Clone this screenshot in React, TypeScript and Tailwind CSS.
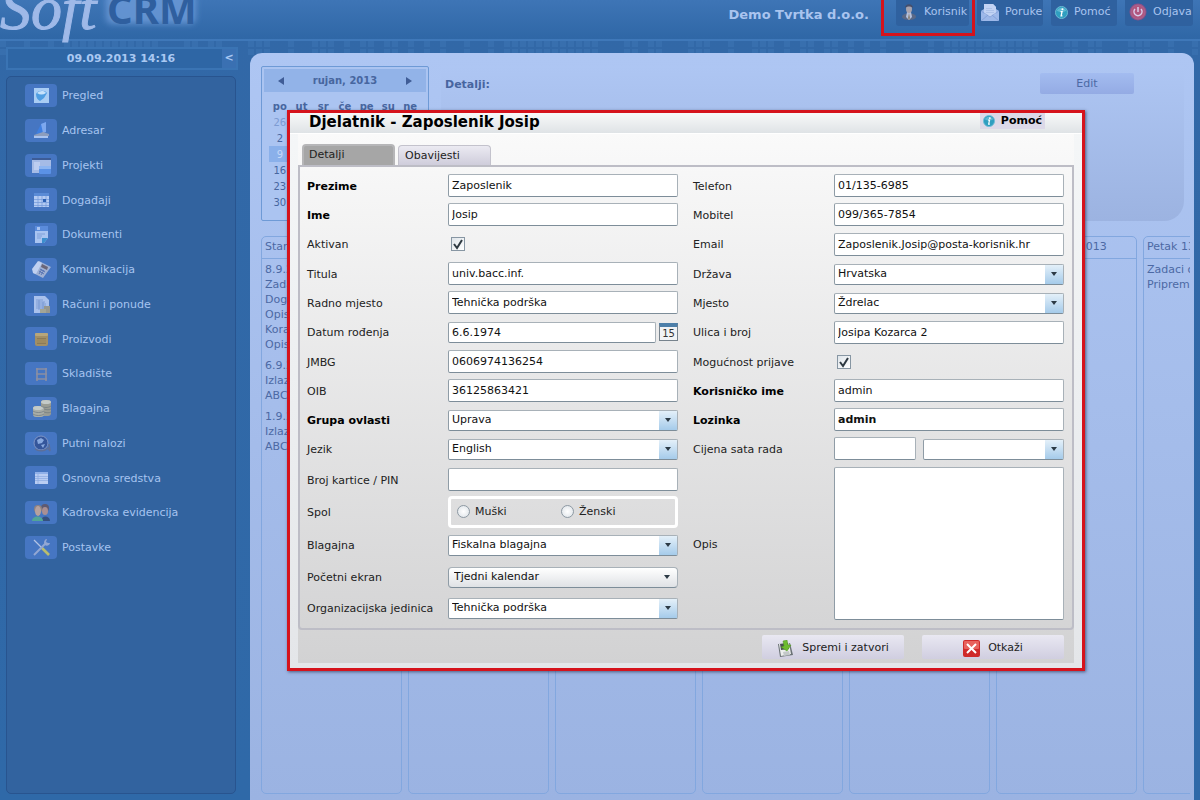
import type { ReactNode } from 'react'

interface IconProps {
  className?: string
}

interface FieldProps {
  id: string
  label: string
  bold?: boolean
  children: ReactNode
}

const MENU: { label: string; icon: ReactNode }[] = [
  {
    label: 'Pregled',
    icon: (
      <>
        <rect x="2" y="2" width="15" height="15" fill="#a9cdf4" />
        <path d="M4 8c2-4 9-4 11-1-1 2-2 3-3 5l-4 3c-2-1-4-3-4-7z" fill="#4f9ee2" />
        <path d="M5 7c2-2 7-3 9 0-3 2-6 2-9 0z" fill="#c6e2fb" />
      </>
    ),
  },
  {
    label: 'Adresar',
    icon: (
      <>
        <path d="M4 13L9 3l5-2v10z" fill="#3f7fe0" />
        <path d="M9 3l5-2v10l-3 1z" fill="#7da8ee" />
        <path d="M2 14l9-3 6 2v2H2z" fill="#8c9dbd" />
        <rect x="2" y="15" width="14" height="2" fill="#a9c3ef" />
      </>
    ),
  },
  {
    label: 'Projekti',
    icon: (
      <>
        <rect x="0" y="2" width="19" height="15" fill="#a5bbe6" />
        <rect x="0" y="2" width="19" height="2" fill="#3d5c96" />
        <rect x="2" y="6" width="6" height="8" fill="#bccdf0" />
        <rect x="7" y="10" width="12" height="8" rx="1" fill="#5b92e6" />
        <rect x="7" y="10" width="12" height="3" fill="#8db5f1" />
      </>
    ),
  },
  {
    label: 'Događaji',
    icon: (
      <>
        <rect x="2" y="3" width="15" height="14" fill="#b4cbf3" />
        <rect x="2" y="3" width="15" height="3" fill="#5a8bd6" />
        <path d="M2 9.5h15M2 12.5h15M2 15.5h15M6 6v11M10 6v11M14 6v11" stroke="#7299d8" strokeWidth=".7" />
        <rect x="11" y="9" width="3" height="3" fill="#2d62b4" />
      </>
    ),
  },
  {
    label: 'Dokumenti',
    icon: (
      <>
        <path d="M3 1h13v12l-4 5H3z" fill="#a9c4f1" />
        <rect x="3" y="1" width="13" height="5" fill="#5b8cdb" />
        <rect x="5" y="2" width="3" height="3" fill="#a9c4f1" />
        <path d="M5 9h8M5 11h5M5 13h4" stroke="#7f9fd8" strokeWidth="1" />
        <path d="M10 13h6l-4 5h-2z" fill="#3d8fce" />
      </>
    ),
  },
  {
    label: 'Komunikacija',
    icon: (
      <>
        <path d="M7 1l12 6-8 11L1 13z" fill="#9fb0d3" />
        <path d="M6 1L0 9l1 4 3 1 6-11z" fill="#c0d0f0" />
        <path d="M10 4l6 3-1 3-6-3z" fill="#6b6678" />
        <path d="M8 9l5 3M7 11l5 3M10 9l-3 5M12 10l-3 5" stroke="#5a76b4" strokeWidth="1" />
      </>
    ),
  },
  {
    label: 'Računi i ponude',
    icon: (
      <>
        <path d="M2 1h11l4 4v13H2z" fill="#a9c1ec" />
        <path d="M4 5h7M4 7h9M4 9h10M4 11h10M4 13h8M7 5v10M11 7v8" stroke="#6f8fcb" strokeWidth=".7" />
        <rect x="12" y="11" width="6" height="7" fill="#96978f" />
        <rect x="8" y="14" width="6" height="4" fill="#a3a596" />
      </>
    ),
  },
  {
    label: 'Proizvodi',
    icon: (
      <>
        <rect x="3" y="4" width="13" height="13" rx="2" fill="#a28f66" />
        <rect x="3" y="4" width="13" height="3" rx="1" fill="#b7a67b" />
        <rect x="5" y="9" width="9" height="6" fill="#8b7a57" />
        <path d="M5 11h9M5 13h9" stroke="#b09a69" strokeWidth="1" />
      </>
    ),
  },
  {
    label: 'Skladište',
    icon: (
      <path d="M5 4v13M14 4v13M4 5h11M4 10h11M4 15h11" stroke="#8b8fa3" strokeWidth="1.6" fill="none" />
    ),
  },
  {
    label: 'Blagajna',
    icon: (
      <>
        <rect x="9" y="1" width="10" height="16" rx="3" fill="#9a9d95" />
        <rect x="1" y="7" width="11" height="11" rx="3" fill="#a9ada7" />
        <ellipse cx="14" cy="3" rx="5" ry="2" fill="#c4cac8" />
        <ellipse cx="6" cy="9" rx="5" ry="2" fill="#c4cac8" />
        <path d="M9 7c3 2 7 2 10 0M12 10c3 1 5 1 7 0M12 13c3 1 5 1 7 0M1 12c3 2 8 2 11 0M1 15c3 2 8 2 11 0" stroke="#6f7880" strokeWidth=".7" fill="none" />
      </>
    ),
  },
  {
    label: 'Putni nalozi',
    icon: (
      <>
        <circle cx="9" cy="9" r="7" fill="#34569b" stroke="#7e95c6" />
        <path d="M5 6l4-2 3 2-2 3-4 1zM9 11l4-1-2 4z" fill="#88a9df" />
        <path d="M3 15c4 3 10 2 13-1l2 3-1-7" stroke="#5d6f98" strokeWidth="1.5" fill="none" />
      </>
    ),
  },
  {
    label: 'Osnovna sredstva',
    icon: (
      <>
        <rect x="3" y="4" width="13" height="12" fill="#b9cdf3" />
        <rect x="3" y="4" width="13" height="2" fill="#8fb0e9" />
        <path d="M3 8.5h13M3 10.5h13M3 12.5h13M6 6v10" stroke="#8aa9e0" strokeWidth=".7" />
      </>
    ),
  },
  {
    label: 'Kadrovska evidencija',
    icon: (
      <>
        <circle cx="13" cy="5" r="4" fill="#5e5a72" />
        <ellipse cx="13" cy="8" rx="3" ry="4" fill="#a98f94" />
        <path d="M9 18c0-6 9-6 9 0z" fill="#35507f" />
        <circle cx="6" cy="6" r="4" fill="#8e8281" />
        <ellipse cx="6" cy="8" rx="3" ry="5" fill="#b6a19e" />
        <path d="M0 18c0-6 11-6 11 0z" fill="#52a597" />
      </>
    ),
  },
  {
    label: 'Postavke',
    icon: (
      <>
        <path d="M2 2l9 9" stroke="#b3c3e4" strokeWidth="1.2" />
        <path d="M10 10l7 7" stroke="#b9bd6e" strokeWidth="2.6" />
        <path d="M2 17L13 6" stroke="#93a7d3" strokeWidth="2" />
        <path d="M18 5c-1 4-6 3-6 0 0-2 1-4 3-4l-1 3 2 1z" fill="#93a7d3" />
      </>
    ),
  },
]

const WEEKDAYS = ['po', 'ut', 'sr', 'če', 'pe', 'su', 'ne']
const WEEKS = [
  [26, 27, 28, 29, 30, 31, 1],
  [2, 3, 4, 5, 6, 7, 8],
  [9, 10, 11, 12, 13, 14, 15],
  [16, 17, 18, 19, 20, 21, 22],
  [23, 24, 25, 26, 27, 28, 29],
  [30, 1, 2, 3, 4, 5, 6],
]

const COLUMNS: { title: string; groups: string[][] }[] = [
  {
    title: 'Stari zadaci',
    groups: [
      ['8.9.2013', 'Zadatak', 'Događaj', 'Opis', 'Korak', 'Opis'],
      ['6.9.2013', 'Izlazni račun', 'ABC d.o.o.'],
      ['1.9.2013', 'Izlazni račun', 'ABC d.o.o.'],
    ],
  },
  { title: 'Danas', groups: [] },
  { title: 'Ponedjeljak 9.9.2013', groups: [] },
  { title: 'Utorak 10.9.2013', groups: [] },
  { title: 'Srijeda 11.9.2013', groups: [] },
  { title: 'Četvrtak 12.9.2013', groups: [] },
  { title: 'Petak 13.9.2013', groups: [['Zadaci odjela', 'Pripremiti']] },
]

// Squares that fade away below the header
const TILES = Array.from({ length: 300 }, (_, i) => {
  const column = i % 150
  const row = Math.floor(i / 150)
  return { x: column * 8, y: row * 8, on: (column * 7 + row * 5 + ((column * column) % 11)) % 5 < 3 }
})

const inputClass =
  'w-full rounded-[2px] border border-[#a8b1b8] border-b-[#7d8d99] border-l-[#8f9ca6] bg-white px-[3px] text-[#111] outline-none'

const InfoIcon = ({ className = '' }: IconProps) => (
  <svg viewBox="0 0 14 14" className={className} aria-hidden="true">
    <circle cx="7" cy="7" r="6.5" fill="#2f9fc0" stroke="#6fbcd6" strokeWidth="1" />
    <path d="M2 5c2-4 8-4 10 0-3 2-7 2-10 0z" fill="#8fd3e6" opacity=".5" />
    <circle cx="8" cy="3.6" r="1.1" fill="#fff" />
    <path d="M6 6h1.6l-1 4.6h1.4" stroke="#fff" strokeWidth="1.4" fill="none" />
  </svg>
)

const Logo = () => (
  <svg className="h-[46px] w-[210px] shrink-0 overflow-visible" viewBox="0 0 210 46" role="img" aria-label="Soft CRM">
    <defs>
      <filter id="glow" x="-20%" y="-50%" width="140%" height="200%">
        <feGaussianBlur stdDeviation="3" />
      </filter>
    </defs>
    <rect x="106" y="-8" width="90" height="32" rx="6" fill="#6d9bd9" opacity=".8" filter="url(#glow)" />
    <text x="107" y="24" className="font-['Noto_Sans',sans-serif] text-[40px] font-bold" fill="#2f5f9f">
      CRM
    </text>
    <text x="0" y="29" className="font-['Liberation_Serif',serif] text-[62px] italic" fill="#9fb9e8" stroke="#9fb9e8" strokeWidth="1">
      Soft
    </text>
  </svg>
)

const HeaderLink = ({ label, className, children }: { label: string; className: string; children: ReactNode }) => (
  <a href="#" className={`flex h-[26px] items-center gap-[6px] rounded-b-[3px] bg-[#2f619f] px-1 pb-[2px] text-[#a9c4ef] ${className}`}>
    {children}
    {label}
  </a>
)

const Header = () => (
  <header className="relative flex h-[41px] shrink-0 items-start border-b-2 border-[#3f78b9] bg-linear-to-b from-[#3e75b6] to-[#2f67a6] pr-[7px]">
    <Logo />
    <p className="mr-[27px] ml-auto pt-[7px] text-[13px] leading-4 font-bold whitespace-nowrap text-[#a9c4ef]">Demo Tvrtka d.o.o.</p>
    <nav className="flex gap-2">
      <div className="relative">
        <HeaderLink label="Korisnik" className="w-[73px]">
          <svg viewBox="0 0 18 18" className="size-[18px] shrink-0" aria-hidden="true">
            <path d="M2 14c0-5 14-5 14 0-1 4-13 4-14 0z" fill="#5a6886" />
            <path d="M7 9h4l1 5-3 3-3-3z" fill="#b4c1dd" />
            <path d="M9 10l1 5-1 2-1-2z" fill="#8a7f72" />
            <ellipse cx="9" cy="6" rx="3" ry="4" fill="#a9a3ac" />
            <path d="M5 5c0-5 8-5 8 0-2-2-6-2-8 0z" fill="#454f6c" />
          </svg>
        </HeaderLink>
        <span className="absolute -top-1 -left-[15px] h-10 w-[94px] border-3 border-[#d5131c]" />
      </div>
      <HeaderLink label="Poruke" className="w-[66px]">
        <svg viewBox="0 0 18 18" className="size-[18px] shrink-0" aria-hidden="true">
          <path d="M0 8l3-2V1h9l3 3v2l3 2v10H0z" fill="#9db8e9" />
          <path d="M3 1h9l3 3v7l-6 3-6-3z" fill="#c2d3f4" />
          <path d="M5 5.5h6M5 7.5h8M5 9.5h8" stroke="#a3bae4" strokeWidth=".7" />
          <path d="M0 18l7-6M18 18l-7-6M0 8l9 6 9-6" stroke="#7f9dd6" strokeWidth=".8" fill="none" />
        </svg>
      </HeaderLink>
      <HeaderLink label="Pomoć" className="w-[66px]">
        <InfoIcon className="size-[13px] shrink-0" />
      </HeaderLink>
      <HeaderLink label="Odjava" className="w-[68px]">
        <svg viewBox="0 0 18 18" className="size-[18px] shrink-0" aria-hidden="true">
          <circle cx="9" cy="9" r="8.5" fill="#8f4f87" />
          <circle cx="9" cy="9" r="7" fill="#b0567f" stroke="#a9668f" />
          <path d="M6 6a4 4 0 1 0 6 0M9 4v5" stroke="#d9cdec" strokeWidth="1.5" fill="none" />
        </svg>
      </HeaderLink>
    </nav>
  </header>
)

const Sidebar = () => (
  <aside className="flex w-[238px] shrink-0 flex-col gap-[6px] pt-[6px] pb-[6px] pl-[6px]">
    <div className="flex h-[23px] shrink-0 items-stretch border-2 border-[#3a74b4] bg-[#2e66a5] font-bold text-[#a9c8f2]">
      <time className="flex flex-1 items-center justify-center pt-[2px] pl-3">09.09.2013 14:16</time>
      <button type="button" aria-label="Sakrij izbornik" className="w-[14px] bg-[#3a70b2]">
        &lt;
      </button>
    </div>
    <nav className="mr-[2px] flex-1 rounded-[5px] border border-[#28548f] bg-[#32639f] pt-[7px] pl-[18px]">
      <ul className="flex h-[475px] flex-col justify-between">
        {MENU.map((item) => (
          <li key={item.label}>
            <a href="#" className="flex h-[23px] items-center gap-[5px] text-[#a6c3f0]">
              <span className="flex h-[23px] w-8 items-center justify-center rounded-[4px] bg-[#4676c2]">
                <svg viewBox="0 0 19 19" className="size-[19px]" aria-hidden="true">
                  {item.icon}
                </svg>
              </span>
              <span className="pt-[2px]">{item.label}</span>
            </a>
          </li>
        ))}
      </ul>
    </nav>
  </aside>
)

const MiniCalendar = () => (
  <section className="h-[155px] w-[168px] shrink-0 rounded-[2px] border border-[#6e9ad6] bg-[#abc4f1] p-[2px] text-[10px] text-[#47669f]">
    <div className="flex h-[23px] items-center justify-between bg-[#92b3e8] px-[14px] font-bold">
      <button type="button" aria-label="Prethodni mjesec">
        <svg viewBox="0 0 6 8" className="block h-2 w-[6px]" aria-hidden="true">
          <path d="M6 0v8L0 4z" fill="#3f5c96" />
        </svg>
      </button>
      <span>rujan, 2013</span>
      <button type="button" aria-label="Sljedeći mjesec">
        <svg viewBox="0 0 6 8" className="block h-2 w-[6px]" aria-hidden="true">
          <path d="M0 0v8l6-4z" fill="#3f5c96" />
        </svg>
      </button>
    </div>
    <table className="mx-auto mt-[6px] w-[152px] table-fixed text-center">
      <thead>
        <tr className="h-4">
          {WEEKDAYS.map((day) => (
            <th key={day} className="p-0">
              {day}
            </th>
          ))}
        </tr>
      </thead>
      <tbody>
        {WEEKS.map((week, row) => (
          <tr key={row} className="h-4">
            {week.map((day, i) => (
              <td
                key={i}
                className={`p-0 ${row === 2 && i === 0 ? 'bg-[#8ab0ea] text-[#c5d8f8]' : row === 0 ? 'text-[#7d9bd2]' : ''}`}
              >
                {day}
              </td>
            ))}
          </tr>
        ))}
      </tbody>
    </table>
  </section>
)

const Workspace = () => (
  <main className="mt-3 mr-[6px] ml-3 flex min-w-0 flex-1 flex-col gap-[15px] overflow-hidden rounded-t-[12px] bg-linear-to-b from-[#aec6f3] to-[#9bb3e2] pt-[13px] pr-1 pb-[6px] pl-[11px] text-[#4c69a4]">
    <div className="flex shrink-0 gap-3">
      <MiniCalendar />
      <section className="mr-[6px] flex flex-1 items-start justify-between rounded-br-[20px] bg-linear-to-b from-[#aec6f3] to-[#9cb3e1] pt-[7px] pr-[50px] pl-1">
        <h2 className="pt-1 font-bold text-[#47659f]">Detalji:</h2>
        <button type="button" className="h-[21px] w-[94px] rounded-[2px] bg-linear-to-b from-[#a3bcf0] to-[#94abe4] pt-[2px]">
          Edit
        </button>
      </section>
    </div>
    <div className="flex flex-1 gap-[6px] overflow-hidden">
      {COLUMNS.map((column) => (
        <section key={column.title} className="w-[141px] shrink-0 rounded-[5px] border border-[#82a7df]">
          <h3 className="h-[22px] border-b border-[#82a7df] pl-[3px] leading-5 whitespace-nowrap">{column.title}</h3>
          <div className="flex flex-col gap-[6px] pt-[3px] pl-[3px]">
            {column.groups.map((group, i) => (
              <ul key={i}>
                {group.map((line, j) => (
                  <li key={j} className="leading-[15px]">
                    {line}
                  </li>
                ))}
              </ul>
            ))}
          </div>
        </section>
      ))}
    </div>
  </main>
)

const Field = ({ id, label, bold = false, children }: FieldProps) => (
  <>
    <label htmlFor={id} className={`pt-[3px] ${bold ? 'font-bold text-black' : ''}`}>
      {label}
    </label>
    {children}
  </>
)

const TextField = ({ id, label, value = '', bold, boldValue }: { id: string; label: string; value?: string; bold?: boolean; boldValue?: boolean }) => (
  <Field id={id} label={label} bold={bold}>
    <input id={id} type="text" defaultValue={value} className={`h-[23px] ${inputClass} ${boldValue ? 'font-bold' : ''}`} />
  </Field>
)

const Select = ({ id, value, label, plain = false }: { id: string; value: string; label?: string; plain?: boolean }) => (
  <div className="relative w-full pt-px">
    <select
      id={id}
      aria-label={label}
      defaultValue={value}
      className={`block h-[21px] w-full appearance-none border border-[#a8b1b8] border-b-[#7d8d99] border-l-[#8f9ca6] pt-px text-[#111] outline-none ${
        plain ? 'rounded-[4px] bg-linear-to-b from-white to-[#dfe2e5] px-[5px]' : 'rounded-[2px] bg-white px-[3px]'
      }`}
    >
      <option>{value}</option>
    </select>
    <span
      className={`pointer-events-none absolute top-[2px] right-px bottom-px flex items-center justify-center ${
        plain ? 'w-[21px]' : 'w-[18px] bg-linear-to-b from-[#e4f0f9] to-[#a5cbea]'
      }`}
    >
      <svg viewBox="0 0 6 4" className="h-1 w-[6px]" aria-hidden="true">
        <path d="M0 0h6L3 4z" fill="#2c3a45" />
      </svg>
    </span>
  </div>
)

const SelectField = ({ id, label, value, bold, plain }: { id: string; label: string; value: string; bold?: boolean; plain?: boolean }) => (
  <Field id={id} label={label} bold={bold}>
    <Select id={id} value={value} plain={plain} />
  </Field>
)

const CheckField = ({ id, label }: { id: string; label: string }) => (
  <Field id={id} label={label}>
    <span className="relative ml-[3px] size-[14px]">
      <input id={id} type="checkbox" defaultChecked className="peer block size-[14px] appearance-none border border-[#8796a3] bg-linear-to-br from-[#dfe5ea] to-white" />
      <svg viewBox="0 0 14 14" className="pointer-events-none absolute inset-0 hidden size-[14px] peer-checked:block" aria-hidden="true">
        <path d="M3 7l3 4 5-8" stroke="#2f3a42" strokeWidth="2" fill="none" />
      </svg>
    </span>
  </Field>
)

const Radio = ({ id, label, className = '' }: { id: string; label: string; className?: string }) => (
  <span className={`flex items-center gap-[5px] ${className}`}>
    <input id={id} type="radio" name="spol" className="size-[13px] appearance-none rounded-full border border-[#8d99a3] bg-radial from-white to-[#dbe1e6] checked:border-4" />
    <label htmlFor={id} className="pt-[2px]">
      {label}
    </label>
  </span>
)

const EmployeeForm = () => (
  <div className="flex gap-[15px] rounded-b-[4px] border-2 border-[#bdbdc6] py-1 pr-2 pl-[7px]">
    <div className="grid flex-1 grid-cols-[141px_1fr] grid-rows-[29px_29px_30px_29px_29px_30px_29px_29px_29px_29px_33px_31px_35px_29px_33px] items-center">
      <TextField id="prezime" label="Prezime" value="Zaposlenik" bold />
      <TextField id="ime" label="Ime" value="Josip" bold />
      <CheckField id="aktivan" label="Aktivan" />
      <TextField id="titula" label="Titula" value="univ.bacc.inf." />
      <TextField id="radno-mjesto" label="Radno mjesto" value="Tehnička podrška" />
      <Field id="datum" label="Datum rođenja">
        <div className="flex items-center gap-[3px]">
          <input id="datum" type="text" defaultValue="6.6.1974" className={`h-[21px] min-w-0 flex-1 pt-px ${inputClass}`} />
          <button type="button" aria-label="Odaberi datum" className="h-[18px] w-[19px] border border-[#77838d] border-t-4 border-t-[#4d7fa9] bg-[#f1f3f5] text-[10px] leading-3 text-[#333]">
            15
          </button>
        </div>
      </Field>
      <TextField id="jmbg" label="JMBG" value="0606974136254" />
      <TextField id="oib" label="OIB" value="36125863421" />
      <SelectField id="grupa" label="Grupa ovlasti" value="Uprava" bold />
      <SelectField id="jezik" label="Jezik" value="English" />
      <TextField id="kartica" label="Broj kartice / PIN" />
      <span id="spol" className="pt-[3px]">
        Spol
      </span>
      <div role="radiogroup" aria-labelledby="spol" className="flex h-8 items-center rounded-[4px] border-3 border-white pl-[6px]">
        <Radio id="muski" label="Muški" className="w-[104px]" />
        <Radio id="zenski" label="Ženski" />
      </div>
      <SelectField id="blagajna" label="Blagajna" value="Fiskalna blagajna" />
      <SelectField id="ekran" label="Početni ekran" value="Tjedni kalendar" plain />
      <SelectField id="jedinica" label="Organizacijska jedinica" value="Tehnička podrška" />
    </div>
    <div className="grid flex-1 grid-cols-[141px_1fr] grid-rows-[29px_29px_30px_29px_29px_30px_29px_29px_29px_29px_161px] items-center">
      <TextField id="telefon" label="Telefon" value="01/135-6985" />
      <TextField id="mobitel" label="Mobitel" value="099/365-7854" />
      <TextField id="email" label="Email" value="Zaposlenik.Josip@posta-korisnik.hr" />
      <SelectField id="drzava" label="Država" value="Hrvatska" />
      <SelectField id="mjesto" label="Mjesto" value="Ždrelac" />
      <TextField id="ulica" label="Ulica i broj" value="Josipa Kozarca 2" />
      <CheckField id="prijava" label="Mogućnost prijave" />
      <TextField id="korisnik" label="Korisničko ime" value="admin" bold />
      <TextField id="lozinka" label="Lozinka" value="admin" bold boldValue />
      <Field id="cijena" label="Cijena sata rada">
        <div className="flex items-center gap-[7px]">
          <div className="w-[82px] shrink-0">
            <input id="cijena" type="text" className={`block h-[23px] ${inputClass}`} />
          </div>
          <Select id="valuta" value="" label="Valuta" />
        </div>
      </Field>
      <Field id="opis" label="Opis">
        <textarea id="opis" className={`block h-[153px] resize-none ${inputClass}`} />
      </Field>
    </div>
  </div>
)

const EmployeeDialog = () => (
  <div
    role="dialog"
    aria-labelledby="dialog-title"
    className="absolute top-[110px] left-[287px] w-[798px] border-3 border-[#d5131c] bg-linear-to-b from-[#f5f7f8] to-[#e4e6e9] text-[#222] shadow-[1px_1px_3px_rgba(40,50,80,0.7)]"
  >
    <div className="flex h-[21px] items-start justify-between border-b border-white bg-linear-to-b from-[#f8f9f9] to-[#dfe3e6] pr-[37px] pl-[19px]">
      <h1 id="dialog-title" className="text-[15px] leading-[19px] font-bold text-black">
        Djelatnik - Zaposlenik Josip
      </h1>
      <button type="button" className="flex h-4 items-center gap-[6px] bg-[#dcd9e8] px-[3px] font-bold text-black">
        <InfoIcon className="size-3" />
        Pomoć
      </button>
    </div>
    <div className="mx-2 mb-[5px] bg-linear-to-b from-[#fafafa] to-[#d2d2d3]">
      <div role="tablist" className="flex items-end gap-[3px] pt-[10px] pl-1">
        <button type="button" role="tab" aria-selected="true" className="h-[21px] w-[93px] rounded-t-[4px] border-2 border-b-0 border-[#b6b6b8] bg-[#a6a6a6] pl-[5px] text-left">
          Detalji
        </button>
        <button type="button" role="tab" aria-selected="false" className="h-5 w-[93px] rounded-t-[4px] border border-b-0 border-[#c3c2cc] bg-linear-to-b from-[#ebeaf2] to-[#cfcddb] pt-px pl-[6px] text-left">
          Obavijesti
        </button>
      </div>
      <EmployeeForm />
      <div className="flex justify-end gap-[18px] pt-[5px] pr-[10px] pb-1">
        <button type="button" className="flex h-6 w-[142px] items-center justify-center gap-2 rounded-[2px] bg-linear-to-b from-[#e9e8f2] to-[#d0cee0] pt-[2px]">
          <svg viewBox="0 0 17 17" className="size-[17px]" aria-hidden="true">
            <path d="M1 4l12-1 3 12-13 2z" fill="#6b7276" />
            <path d="M2 4l10-1 2 11-10 2z" fill="#eceeed" />
            <path d="M3 4l8-1 1 6-8 1z" fill="#4b5154" />
            <path d="M6 12l6-1 1 4-6 1z" fill="#c3c8c9" />
            <path d="M6 1l4-1 1 5 3 0-4 6-6-4 3-1z" fill="#6dbb2f" stroke="#4c9420" strokeWidth=".5" />
          </svg>
          Spremi i zatvori
        </button>
        <button type="button" className="flex h-6 w-[142px] items-center justify-center gap-2 rounded-[2px] bg-linear-to-b from-[#e9e8f2] to-[#d0cee0] pt-[2px]">
          <svg viewBox="0 0 17 17" className="size-[17px]" aria-hidden="true">
            <rect x="0" y="0" width="17" height="17" rx="2" fill="#cf2a2a" />
            <rect x="1" y="1" width="15" height="8" rx="1" fill="#e8625d" />
            <path d="M4 4l9 9M13 4l-9 9" stroke="#fff" strokeWidth="2" />
          </svg>
          Otkaži
        </button>
      </div>
    </div>
  </div>
)

export default function App() {
  return (
    <div className="relative flex h-screen min-h-[700px] flex-col overflow-hidden bg-linear-to-b from-[#3268a7] to-[#2f69a8] font-['DejaVu_Sans',Verdana,sans-serif] text-[11px]">
      <svg className="absolute inset-x-0 top-[41px] h-[18px] w-full" aria-hidden="true">
        {TILES.filter((tile) => tile.on).map((tile) => (
          <rect key={`${tile.x}-${tile.y}`} x={tile.x} y={tile.y} width="6" height="6" fill="#3d76b5" opacity=".5" />
        ))}
      </svg>
      <Header />
      <div className="relative flex min-h-0 flex-1">
        <Sidebar />
        <Workspace />
      </div>
      <EmployeeDialog />
    </div>
  )
}
